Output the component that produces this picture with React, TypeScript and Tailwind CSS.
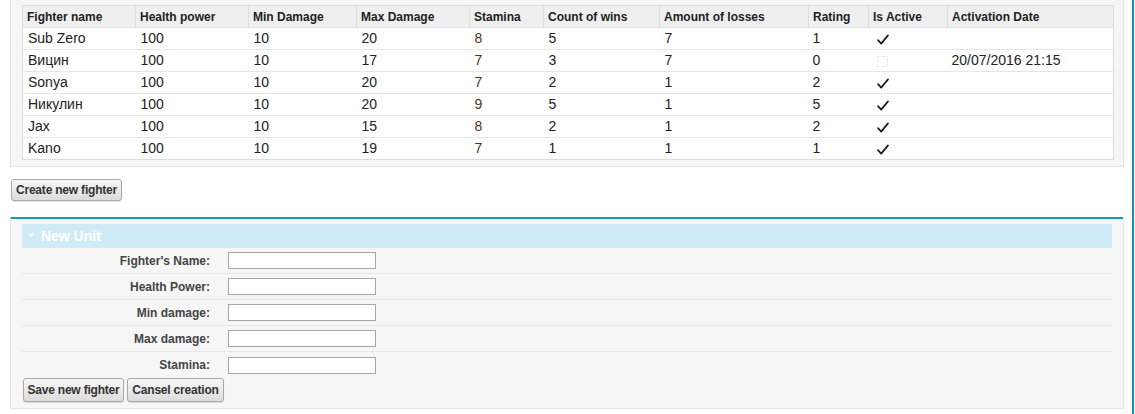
import React from "react";

const columns = [
  { title: "Fighter name", w: 113 },
  { title: "Health power", w: 113 },
  { title: "Min Damage", w: 108 },
  { title: "Max Damage", w: 113 },
  { title: "Stamina", w: 74 },
  { title: "Count of wins", w: 116 },
  { title: "Amount of losses", w: 149 },
  { title: "Rating", w: 60 },
  { title: "Is Active", w: 79 },
  { title: "Activation Date", w: 166 },
];

const fighters = [
  { name: "Sub Zero", hp: 100, min: 10, max: 20, stamina: 8, wins: 5, losses: 7, rating: 1, active: true, date: "" },
  { name: "Вицин", hp: 100, min: 10, max: 17, stamina: 7, wins: 3, losses: 7, rating: 0, active: false, date: "20/07/2016 21:15" },
  { name: "Sonya", hp: 100, min: 10, max: 20, stamina: 7, wins: 2, losses: 1, rating: 2, active: true, date: "" },
  { name: "Никулин", hp: 100, min: 10, max: 20, stamina: 9, wins: 5, losses: 1, rating: 5, active: true, date: "" },
  { name: "Jax", hp: 100, min: 10, max: 15, stamina: 8, wins: 2, losses: 1, rating: 2, active: true, date: "" },
  { name: "Kano", hp: 100, min: 10, max: 19, stamina: 7, wins: 1, losses: 1, rating: 1, active: true, date: "" },
];

const formFields = ["Fighter's Name:", "Health Power:", "Min damage:", "Max damage:", "Stamina:"];

function GrayButton({ children, className = "" }: { children: React.ReactNode; className?: string }) {
  return (
    <button
      className={`px-0 border border-[#a9a9a9] rounded-[3px] bg-gradient-to-b from-[#f7f7f7] to-[#dcdcdc] text-[12px] font-bold text-[#333] leading-none text-center shadow-[0_1px_1px_rgba(0,0,0,0.12)] whitespace-nowrap tracking-[-0.2px] ${className}`}
    >
      {children}
    </button>
  );
}

function CheckMark() {
  return (
    <svg width="12" height="11" viewBox="0 0 12 11" className="inline-block align-middle">
      <path d="M1 6.2 L4.2 9.6 L11 1.4" stroke="#1a1a1a" strokeWidth="1.7" fill="none" strokeLinecap="round" strokeLinejoin="round" />
    </svg>
  );
}

export default function App() {
  return (
    <div className="w-[1135px] h-[414px] bg-white overflow-hidden" style={{ fontFamily: '"Liberation Sans", Arial, sans-serif' }}>
      <div className="w-[1134px] h-full border-r-2 border-[#1a8db3] pl-[10px] pr-[8px]">
        {/* fighters list */}
        <div className="bg-[#f6f6f6] border border-t-0 border-[#e3e3e3] pl-[11px] pr-[10px] pt-[5px] pb-[6px]">
          <table className="w-[1091px] table-fixed border-collapse border border-[#dcdcdc] bg-white text-[#222]">
            <colgroup>
              {columns.map((c) => (
                <col key={c.title} style={{ width: c.w }} />
              ))}
            </colgroup>
            <thead>
              <tr className="h-[22px] bg-[#efefef]">
                {columns.map((c) => (
                  <th key={c.title} className="px-[4px] text-left text-[12px] font-bold text-[#222] border-l border-[#dedede] border-b border-b-[#e2e2e2] first:border-l-0 whitespace-nowrap">
                    {c.title}
                  </th>
                ))}
              </tr>
            </thead>
            <tbody className="text-[14px]">
              {fighters.map((f) => (
                <tr key={f.name} className="h-[22px] border-t border-[#e6e6e6] first:border-t-0">
                  <td className="px-[5px]">{f.name}</td>
                  <td className="px-[5px]">{f.hp}</td>
                  <td className="px-[5px]">{f.min}</td>
                  <td className="px-[5px]">{f.max}</td>
                  <td className="px-[5px] text-[#4f3320]">{f.stamina}</td>
                  <td className="px-[5px]">{f.wins}</td>
                  <td className="px-[5px]">{f.losses}</td>
                  <td className="px-[4px]">{f.rating}</td>
                  <td className="pl-[8px]">
                    {f.active ? (
                      <CheckMark />
                    ) : (
                      <span className="inline-block w-[11px] h-[11px] border border-dotted border-[#e2e2e2] align-middle" />
                    )}
                  </td>
                  <td className="px-[4px] whitespace-nowrap">{f.date}</td>
                </tr>
              ))}
            </tbody>
          </table>
        </div>

        <div className="mt-[10px] pl-[1px]">
          <GrayButton className="w-[111px] h-[22px]">Create new fighter</GrayButton>
        </div>

        {/* new unit form */}
        <div className="mt-[16px] bg-[#f6f6f6] border border-[#e3e3e3] border-t-2 border-t-[#1a93ba] rounded-tr-[2px] pl-[11px] pr-[11px] pt-[5px] pb-[6px]">
          <div className="h-[24px] bg-[#cfebf6] flex items-center pl-[4px] text-white font-bold text-[14px]">
            <span className="text-[8px] mr-[6px] ml-[1px]">▼</span>
            New Unit
          </div>
          {formFields.map((label, i) => (
            <div
              key={label}
              className={`h-[26px] flex items-center ${i < formFields.length - 1 ? "border-b border-[#e6e6e6]" : ""}`}
            >
              <label className="w-[188px] text-right text-[12px] font-bold text-[#444]">{label}</label>
              <input className="ml-[18px] w-[148px] h-[17px] border border-[#a5a5a5] bg-white" />
            </div>
          ))}
          <div className="flex gap-[3px] pl-[1px]">
            <GrayButton className="w-[101px] h-[24px]">Save new fighter</GrayButton>
            <GrayButton className="w-[97px] h-[24px]">Cansel creation</GrayButton>
          </div>
        </div>
      </div>
    </div>
  );
}
